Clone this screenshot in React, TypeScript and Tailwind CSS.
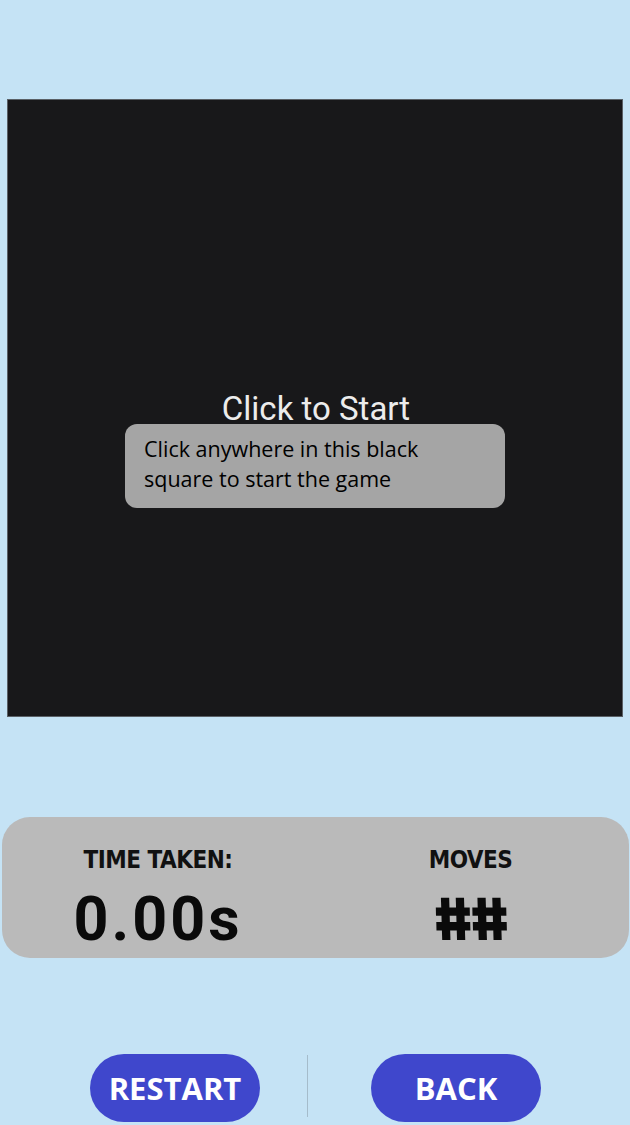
export default function App() {
  return (
    <div className="flex h-[1125px] w-[630px] flex-col bg-[#c5e3f5] pt-[99px]" style={{ fontFamily: '"Open Sans", sans-serif' }}>
      {/* Game board */}
      <div className="relative mx-[7px] h-[618px] w-[616px] border border-[#5a6066] bg-[#18181a]">
        <div className="absolute left-0 right-0 top-[287px] pl-[2px] text-center font-['Roboto',sans-serif] text-[33px] leading-[44px] text-[#ececec]">
          Click to Start
        </div>
        <div className="absolute left-[117px] top-[324px] h-[84px] w-[380px] rounded-[12px] bg-[#a5a5a5] px-[19px] pt-[10px] text-[21.5px] leading-[30px] text-black">
          Click anywhere in this black
          <br />
          square to start the game
        </div>
      </div>

      {/* Stats */}
      <div className="mx-[2px] mt-[100px] flex h-[141px] w-[627px] rounded-[28px] bg-[#bababa] pt-[26px]">
        <div className="flex w-[314px] flex-col items-center pr-[2px]">
          <div className="font-['DejaVu_Sans_Condensed',sans-serif] text-[24px] font-bold leading-[34px] tracking-[-0.5px] text-[#111]">
            TIME TAKEN:
          </div>
          <div className="mt-[10px] font-['Roboto',sans-serif] text-[61px] font-bold leading-[64px] tracking-[3px] text-[#0a0a0a]">
            0.00s
          </div>
        </div>
        <div className="flex flex-1 flex-col items-center pr-[4px]">
          <div className="font-['DejaVu_Sans_Condensed',sans-serif] text-[24px] font-bold leading-[34px] tracking-[-0.5px] text-[#111]">
            MOVES
          </div>
          <div className="mt-[10px] inline-block skew-x-[11deg] font-['Inter',sans-serif] text-[58px] font-black leading-[64px] tracking-[-2px] text-[#0a0a0a]">
            ##
          </div>
        </div>
      </div>

      {/* Buttons */}
      <div className="mt-[96px] flex items-start">
        <button className="ml-[90px] flex h-[68px] w-[170px] items-center justify-center rounded-full bg-[#3f47cc] text-[31px] font-bold text-white">
          RESTART
        </button>
        <div className="ml-[47px] mt-[1px] h-[62px] w-[1px] bg-[#a5bccb]" />
        <button className="ml-[63px] flex h-[68px] w-[170px] items-center justify-center rounded-full bg-[#3f47cc] text-[31px] font-bold text-white">
          BACK
        </button>
      </div>
    </div>
  );
}
